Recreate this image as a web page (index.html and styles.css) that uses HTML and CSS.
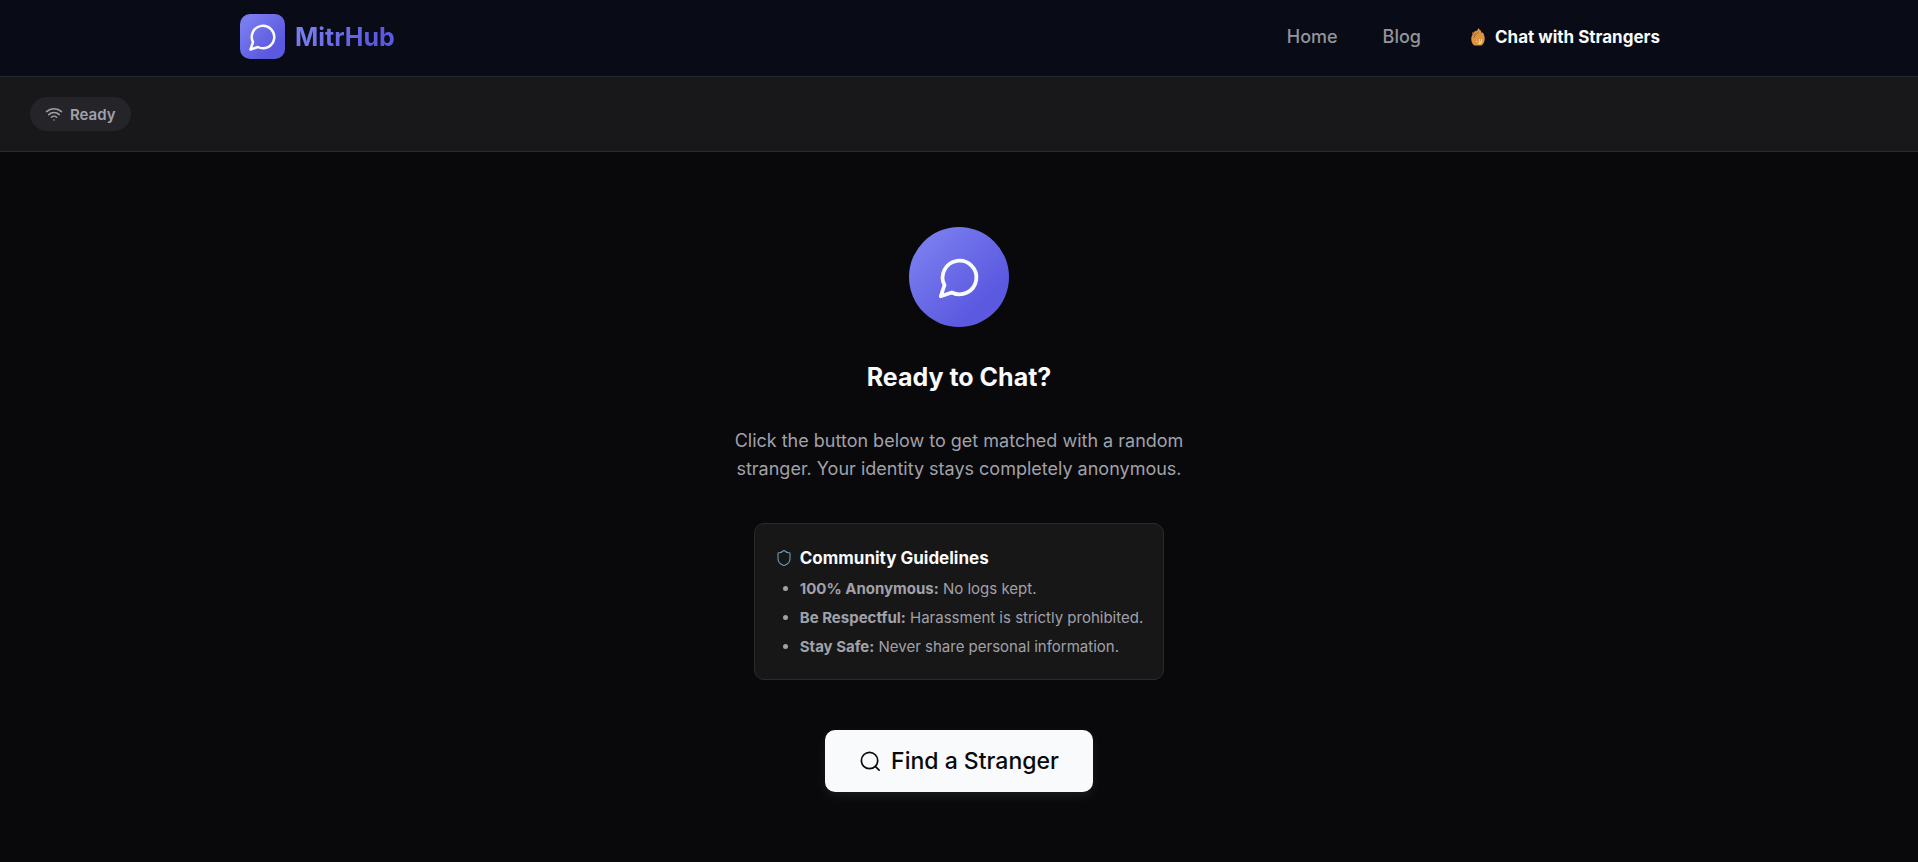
FILE: index.html
```html
<!DOCTYPE html>
<html lang="en">
<head>
<meta charset="utf-8">
<meta name="viewport" content="width=device-width, initial-scale=1">
<title>MitrHub</title>
<link rel="stylesheet" href="styles.css">
</head>
<body>
<header class="site-header">
  <div class="header-inner">
    <a class="brand" href="#">
      <span class="brand-mark"><svg class="icon" width="30" height="30" viewBox="0 0 24 24" aria-hidden="true"><path d="M7.9 20A9 9 0 1 0 4 16.1L2 22Z"/></svg></span>
      <span class="brand-name">MitrHub</span>
    </a>
    <nav class="nav">
      <a class="nav-link" href="#">Home</a>
      <a class="nav-link" href="#">Blog</a>
      <a class="nav-link nav-link-active" href="#">
        <svg class="flame" width="14" height="18" viewBox="0 0 14 18" aria-hidden="true"><path fill="#dc943f" d="M7.300 0C8 1.200 9 1.800 9.800 2.800c.5.7.8 1.500 1 2.400l1-1C13.200 6.500 13.800 9 13.700 11.300 13.500 14 12.500 16 10.500 17.500h-7C1.500 16.500.3 14 .3 11.500.200 9.500.7 8 1.500 6.800L1.400 4l1.400.8L4 2.800l1 .4C6 2.600 7 1.500 7.300 0Z"/><path fill="none" stroke="#8a5526" stroke-width=".7" d="M7.500 3.500C7 6 3.800 6.500 2.800 10M4.500 5 2.500 7.500"/><path fill="#f6d190" d="M5 13h1.500v1H5zM8 11h1v2.500l1-.5v-2h1c.6 2.500 0 4.500-1.700 5-1.500.4-2.800.2-2.800-.8H8z"/></svg>
        Chat with Strangers
      </a>
    </nav>
  </div>
</header>
<div class="status-bar">
  <div class="status-pill" role="status">
    <svg class="icon" width="18" height="18" viewBox="0 0 24 24" aria-hidden="true"><path d="M12 20h.01M2 8.820a15 15 0 0 1 20 0M5 12.860a10 10 0 0 1 14 0M8.500 16.430a5 5 0 0 1 7 0"/></svg>
    Ready
  </div>
</div>
<main class="welcome">
  <div class="welcome-mark"><svg class="icon" width="45" height="45" viewBox="0 0 24 24" aria-hidden="true"><path d="M7.900 20A9 9 0 1 0 4 16.100L2 22Z"/></svg></div>
  <h1 class="title">Ready to Chat?</h1>
  <p class="lead">Click the button below to get matched with a random stranger. Your identity stays completely anonymous.</p>
  <section class="card">
    <h2 class="card-title"><svg class="icon shield" width="18" height="18" viewBox="0 0 24 24" aria-hidden="true"><path d="M20 13c0 5-3.500 7.500-7.660 8.950a1 1 0 0 1-.67-.01C7.500 20.500 4 18 4 13V6a1 1 0 0 1 1-1c2 0 4.500-1.200 6.240-2.720a1.170 1.170 0 0 1 1.520 0C14.510 3.810 17 5 19 5a1 1 0 0 1 1 1z"/></svg>Community Guidelines</h2>
    <ul class="rules">
      <li><strong>100% Anonymous:</strong> No logs kept.</li>
      <li><strong>Be Respectful:</strong> Harassment is strictly prohibited.</li>
      <li><strong>Stay Safe:</strong> Never share personal information.</li>
    </ul>
  </section>
  <button class="find-button" type="button"><svg class="icon search" width="23" height="23" viewBox="0 0 24 24" aria-hidden="true"><circle cx="11" cy="11" r="8.500"/><path d="m21 21-4-4"/></svg>Find a Stranger</button>
</main>
</body>
</html>
```
FILE: styles.css
```css
:root {
  --text: #f8fafc;
  --muted: #a1a1aa;
  --border: #2b2b2e;
  --accent: linear-gradient(135deg, #797cee 15%, #5b59e0 75%);
}

* { box-sizing: border-box; }

body {
  margin: 0;
  min-height: 100vh;
  display: flex;
  flex-direction: column;
  background: #09090b;
  color: var(--text);
  font-family: Inter, "Liberation Sans", sans-serif;
  font-size: 16px;
}

a { color: inherit; text-decoration: none; }
svg { display: block; flex: none; }

.icon {
  fill: none;
  stroke: currentColor;
  stroke-width: 2;
  stroke-linecap: round;
  stroke-linejoin: round;
}

.site-header {
  background: #090b16;
  border-bottom: 1px solid #24252e;
}

.header-inner {
  display: flex;
  align-items: center;
  justify-content: space-between;
  max-width: 1438px;
  margin: 0 auto;
  padding: 14px 0 17px;
}

.brand { display: flex; align-items: center; gap: 10px; }

.brand-mark {
  display: grid;
  place-items: center;
  width: 45px;
  height: 45px;
  border-radius: 10px;
  background: var(--accent);
}

.brand-name {
  font-size: 25px;
  font-weight: 700;
  color: transparent;
  background: var(--accent);
  background-clip: text;
}

.nav {
  display: flex;
  align-items: center;
  gap: 45px;
  padding-right: 18px;
  font-size: 18px;
}

.nav-link { font-weight: 500; color: #94959c; }

.nav-link-active {
  display: flex;
  align-items: center;
  gap: 10px;
  margin-left: 5px;
  font-size: 17px;
  font-weight: 700;
  color: var(--text);
}

.status-bar {
  padding: 20px 30px;
  background: #18181a;
  border-bottom: 1px solid #2c2c30;
}

.status-pill {
  display: inline-flex;
  align-items: center;
  gap: 7px;
  height: 34px;
  padding: 0 15px;
  border-radius: 17px;
  background: #242429;
  color: var(--muted);
  font-size: 15px;
  font-weight: 600;
}

.welcome {
  flex: 1;
  display: flex;
  flex-direction: column;
  align-items: center;
  padding: 75px 20px 20px;
}

.welcome-mark {
  display: grid;
  place-items: center;
  width: 100px;
  height: 100px;
  border-radius: 50%;
  background: var(--accent);
}

.title {
  margin: 32px 0;
  font-size: 25px;
  font-weight: 700;
  line-height: 36px;
}

.lead {
  max-width: 460px;
  margin: 0 0 40px;
  color: var(--muted);
  font-size: 18px;
  line-height: 28px;
  text-align: center;
}

.card {
  margin-bottom: 50px;
  padding: 20px 20px 18px;
  border: 1px solid var(--border);
  border-radius: 10px;
  background: #171717;
}

.card-title {
  display: flex;
  align-items: center;
  gap: 7px;
  margin: 0 0 2px;
  font-size: 17px;
  font-weight: 700;
  line-height: 28px;
}

.shield { color: #6f98b0; stroke-width: 1.5; }

.rules {
  margin: 0;
  padding-left: 25px;
  color: var(--muted);
  font-size: 15px;
  line-height: 29px;
}

.find-button {
  display: inline-flex;
  align-items: center;
  gap: 9px;
  height: 62px;
  padding: 0 34px;
  border: 0;
  border-radius: 10px;
  background: var(--text);
  box-shadow: 0 4px 12px rgba(255, 255, 255, 0.08);
  color: #09090b;
  font: 500 23px Inter, "Liberation Sans", sans-serif;
  cursor: pointer;
}

.search { stroke-width: 1.75; }
```
